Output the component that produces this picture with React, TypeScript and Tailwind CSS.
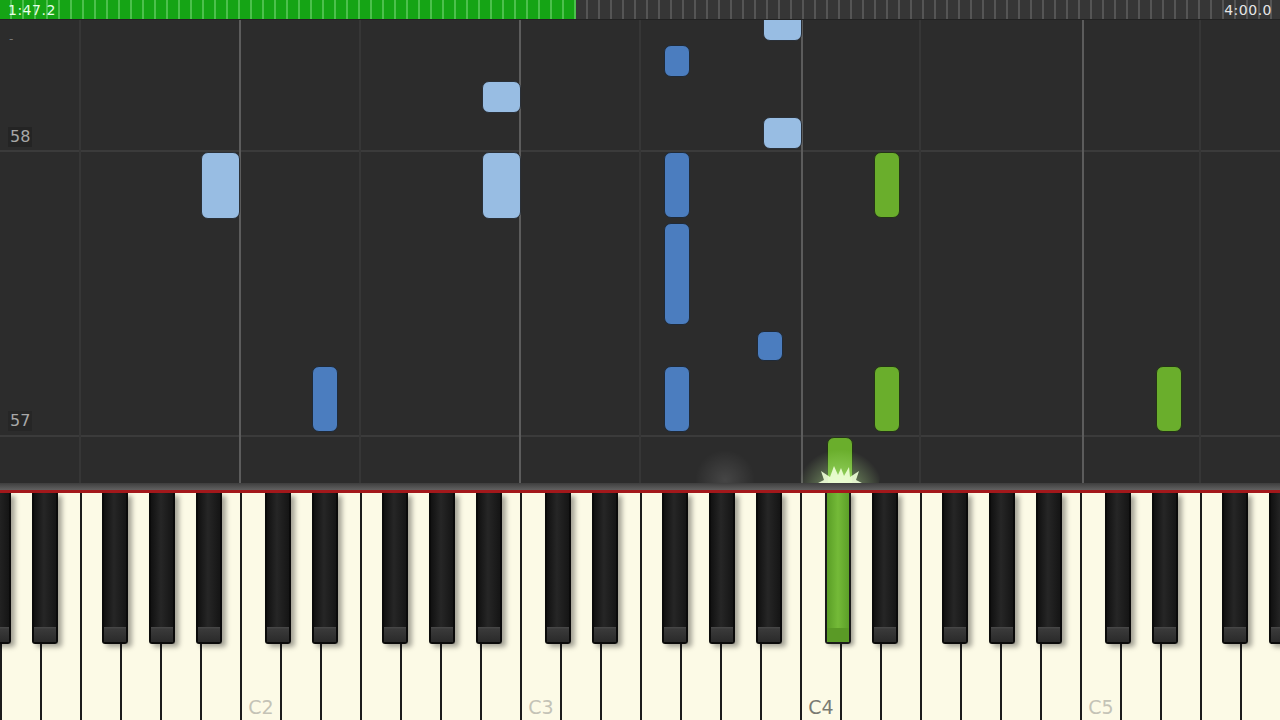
import React from 'react';

type Note = { x: number; top: number; h: number; kind: 'light' | 'dark' | 'green' };

// positions measured against the roll (which starts 20px below the page top)
const notes: Note[] = [
  { x: 763, top: -10, h: 31, kind: 'light' },
  { x: 482, top: 61, h: 32, kind: 'light' },
  { x: 763, top: 97, h: 32, kind: 'light' },
  { x: 201, top: 132, h: 67, kind: 'light' },
  { x: 482, top: 132, h: 67, kind: 'light' },
  { x: 664, top: 25, h: 32, kind: 'dark' },
  { x: 664, top: 132, h: 66, kind: 'dark' },
  { x: 664, top: 203, h: 102, kind: 'dark' },
  { x: 757, top: 311, h: 30, kind: 'dark' },
  { x: 312, top: 346, h: 66, kind: 'dark' },
  { x: 664, top: 346, h: 66, kind: 'dark' },
  { x: 874, top: 132, h: 66, kind: 'green' },
  { x: 874, top: 346, h: 66, kind: 'green' },
  { x: 1156, top: 346, h: 66, kind: 'green' },
  { x: 827, top: 417, h: 70, kind: 'green' },
];

const noteClass = {
  light: 'w-[39px] bg-[#98bde3] border border-[#2a3038]',
  dark: 'w-[26px] bg-[#4b7dbf] border border-[#1f2a38]',
  green: 'w-[26px] bg-[#6aae2c] border border-[#243417]',
};

const whiteLabels: Record<number, string> = { 6: 'C2', 13: 'C3', 20: 'C4', 27: 'C5' };

const blackOffsets = [25, 72, 142, 189, 236];
const blackKeys: { x: number; lit: boolean }[] = [];
for (let c = -40; c < 1280; c += 280) {
  for (const o of blackOffsets) {
    const x = c + o;
    if (x + 25 > 0 && x < 1280) blackKeys.push({ x, lit: x === 825 });
  }
}

const TopBar = () => (
  <div className="h-[20px] flex items-center justify-between bg-[#363636] bg-[repeating-linear-gradient(90deg,transparent_0px,transparent_10px,#555_10px,#555_12px)] border-b border-[#222] text-[14px] leading-[18px] tracking-[0.5px] font-['DejaVu_Sans',sans-serif]">
    <div className="w-[576px] h-full pl-[8px] flex items-center bg-[#15a415] bg-[repeating-linear-gradient(90deg,transparent_0px,transparent_10px,#4cc04c_10px,#4cc04c_12px)] text-[#e8ffe8]">
      1:47.2
    </div>
    <span className="pr-[8px] text-[#e6e6e6]">4:00.0</span>
  </div>
);

const Roll = () => (
  <div className="relative h-[463px] overflow-hidden bg-[#2c2c2c]">
    {/* measure lines */}
    <div className="absolute left-0 right-0 top-[130px] h-[2px] bg-[#3b3b3b]" />
    <div className="absolute left-0 right-0 top-[415px] h-[2px] bg-[#3b3b3b]" />
    {/* faint F lines */}
    {[80, 360, 640, 920, 1200].map((x) => (
      <div key={x} className="absolute top-0 bottom-0 w-[2px] bg-[#363636]" style={{ left: x - 1 }} />
    ))}
    {/* C lines */}
    {[239, 519, 801, 1082].map((x) => (
      <div key={x} className="absolute top-0 bottom-0 w-[2px] bg-[#5c5c5c]" style={{ left: x }} />
    ))}
    <span className="absolute left-[9px] top-[12px] text-[12px] leading-[14px] text-[#777] font-['DejaVu_Sans',sans-serif]">-</span>
    <span className="absolute left-[8px] top-[107px] px-[2px] text-[16px] leading-[20px] text-[#a8a8a8] bg-[#242424] font-['DejaVu_Sans',sans-serif]">
      58
    </span>
    <span className="absolute left-[8px] top-[391px] px-[2px] text-[16px] leading-[20px] text-[#a8a8a8] bg-[#262626] font-['DejaVu_Sans',sans-serif]">
      57
    </span>

    {notes.map((n, i) => (
      <div
        key={i}
        className={`absolute rounded-[7px] ${noteClass[n.kind]}`}
        style={{ left: n.x, top: n.top, height: n.h }}
      />
    ))}

    {/* faint glow left of the lit key */}
    <div className="absolute left-[690px] top-[430px] w-[70px] h-[60px] rounded-full bg-[radial-gradient(circle,rgba(255,255,255,0.12),transparent_65%)]" />
    {/* burst at the lit note */}
    <div className="absolute left-[800px] top-[425px] w-[80px] h-[60px] rounded-full bg-[radial-gradient(circle_at_50%_80%,rgba(235,255,210,0.85),rgba(200,255,160,0.3)_35%,transparent_70%)]" />
    <svg className="absolute left-[812px] top-[446px]" width="56" height="22" viewBox="0 0 56 22">
      <polygon
        points="0,20 12,14 9,5 18,11 22,0 26,9 29,2 32,10 37,1 38,11 47,5 44,14 56,20"
        fill="#f0ffd8"
        opacity="0.9"
      />
    </svg>
  </div>
);

const Keyboard = () => (
  <div className="flex flex-col">
    <div className="h-[7px] bg-[linear-gradient(#3e3e3e,#616161)]" />
    <div className="h-[3px] bg-[#a3181b]" />
    <div className="relative h-[227px] flex overflow-hidden">
      {Array.from({ length: 32 }).map((_, i) => (
        <div
          key={i}
          className="w-[40px] shrink-0 h-full flex items-end justify-center bg-[#fcfae6] border-l-2 border-[#1c1c1c]"
        >
          {whiteLabels[i] && (
            <span
              className={`mb-[2px] text-[19px] leading-[22px] font-['DejaVu_Sans',sans-serif] ${
                i === 20 ? 'text-[#7a7a72]' : 'text-[#c4c3b6]'
              }`}
            >
              {whiteLabels[i]}
            </span>
          )}
        </div>
      ))}
      {blackKeys.map((k) =>
        k.lit ? (
          <div
            key={k.x}
            className="absolute top-0 h-[151px] w-[26px] flex flex-col justify-end rounded-b-[3px] border-2 border-t-0 border-[#1a1a1a] bg-[linear-gradient(90deg,#5a9e26,#74ba38_50%,#5c9f28)] shadow-[3px_2px_4px_rgba(0,0,0,0.35)]"
            style={{ left: k.x }}
          >
            <div className="h-[14px] bg-[#5a9a26]" />
          </div>
        ) : (
          <div
            key={k.x}
            className="absolute top-0 h-[151px] w-[26px] flex flex-col justify-end rounded-b-[3px] border-2 border-t-0 border-[#0a0a0a] bg-[linear-gradient(90deg,#111,#262626_45%,#151515)] shadow-[4px_3px_5px_rgba(0,0,0,0.35)]"
            style={{ left: k.x }}
          >
            <div className="h-[15px] bg-[linear-gradient(#4a4a4a_0px,#3a3a3a_2px,#2a2a2a_100%)]" />
          </div>
        )
      )}
    </div>
  </div>
);

const App: React.FC = () => {
  return (
    <div className="w-[1280px] h-[720px] overflow-hidden flex flex-col bg-[#2c2c2c]">
      <TopBar />
      <Roll />
      <Keyboard />
    </div>
  );
};

export default App;
